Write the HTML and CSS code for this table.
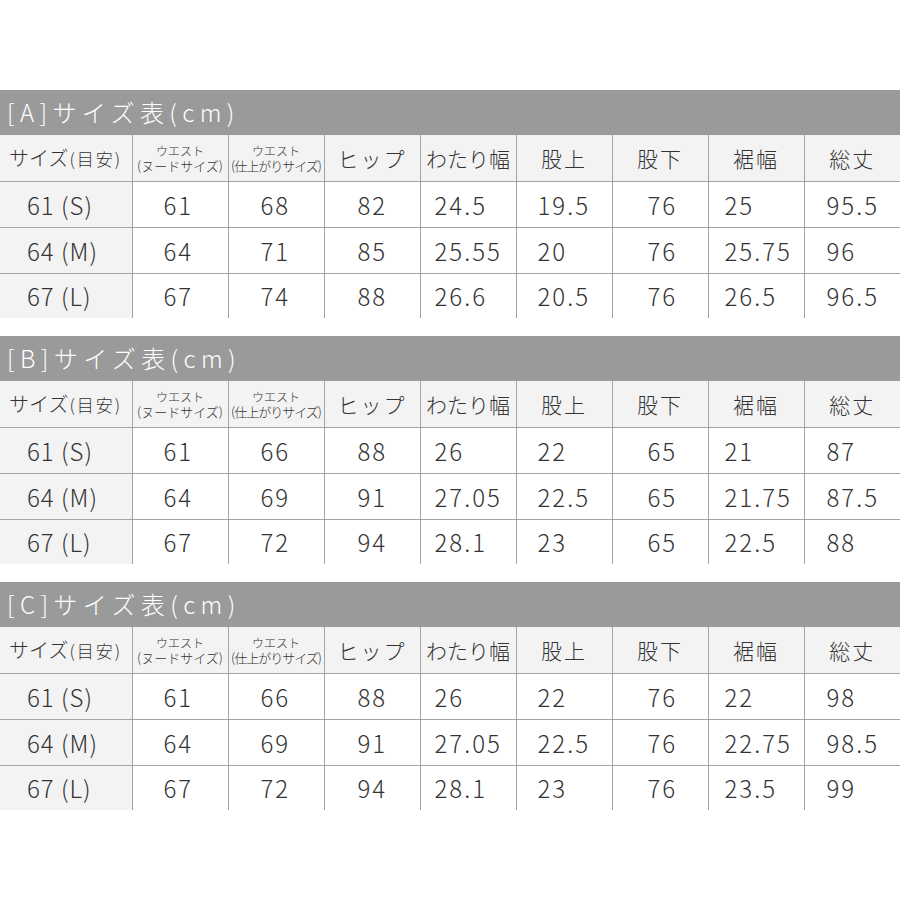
FILE: index.html
```html
<!DOCTYPE html>
<html lang="ja">
<head>
<meta charset="utf-8">
<link rel="stylesheet" href="styles.css">
</head>
<body>
<div class="page">

<section class="block">
  <div class="title">[A]サイズ表(cm)</div>
  <table class="size">
    <colgroup><col class="c1"><col><col><col><col><col><col><col><col></colgroup>
    <thead>
      <tr>
        <th class="h-size">サイズ<span class="sm">(目安)</span></th>
        <th class="h-small"><span>ウエスト</span><span>(ヌードサイズ)</span></th>
        <th class="h-small"><span>ウエスト</span><span class="cond">(仕上がりサイズ)</span></th>
        <th>ヒップ</th><th class="tight">わたり幅</th><th>股上</th><th>股下</th><th>裾幅</th><th>総丈</th>
      </tr>
    </thead>
    <tbody>
      <tr><td>61 (S)</td><td>61</td><td>68</td><td>82</td><td>24.5</td><td>19.5</td><td>76</td><td>25</td><td>95.5</td></tr>
      <tr><td>64 (M)</td><td>64</td><td>71</td><td>85</td><td>25.55</td><td>20</td><td>76</td><td>25.75</td><td>96</td></tr>
      <tr><td>67 (L)</td><td>67</td><td>74</td><td>88</td><td>26.6</td><td>20.5</td><td>76</td><td>26.5</td><td>96.5</td></tr>
    </tbody>
  </table>
</section>

<section class="block">
  <div class="title">[B]サイズ表(cm)</div>
  <table class="size">
    <colgroup><col class="c1"><col><col><col><col><col><col><col><col></colgroup>
    <thead>
      <tr>
        <th class="h-size">サイズ<span class="sm">(目安)</span></th>
        <th class="h-small"><span>ウエスト</span><span>(ヌードサイズ)</span></th>
        <th class="h-small"><span>ウエスト</span><span class="cond">(仕上がりサイズ)</span></th>
        <th>ヒップ</th><th class="tight">わたり幅</th><th>股上</th><th>股下</th><th>裾幅</th><th>総丈</th>
      </tr>
    </thead>
    <tbody>
      <tr><td>61 (S)</td><td>61</td><td>66</td><td>88</td><td>26</td><td>22</td><td>65</td><td>21</td><td>87</td></tr>
      <tr><td>64 (M)</td><td>64</td><td>69</td><td>91</td><td>27.05</td><td>22.5</td><td>65</td><td>21.75</td><td>87.5</td></tr>
      <tr><td>67 (L)</td><td>67</td><td>72</td><td>94</td><td>28.1</td><td>23</td><td>65</td><td>22.5</td><td>88</td></tr>
    </tbody>
  </table>
</section>

<section class="block">
  <div class="title">[C]サイズ表(cm)</div>
  <table class="size">
    <colgroup><col class="c1"><col><col><col><col><col><col><col><col></colgroup>
    <thead>
      <tr>
        <th class="h-size">サイズ<span class="sm">(目安)</span></th>
        <th class="h-small"><span>ウエスト</span><span>(ヌードサイズ)</span></th>
        <th class="h-small"><span>ウエスト</span><span class="cond">(仕上がりサイズ)</span></th>
        <th>ヒップ</th><th class="tight">わたり幅</th><th>股上</th><th>股下</th><th>裾幅</th><th>総丈</th>
      </tr>
    </thead>
    <tbody>
      <tr><td>61 (S)</td><td>61</td><td>66</td><td>88</td><td>26</td><td>22</td><td>76</td><td>22</td><td>98</td></tr>
      <tr><td>64 (M)</td><td>64</td><td>69</td><td>91</td><td>27.05</td><td>22.5</td><td>76</td><td>22.75</td><td>98.5</td></tr>
      <tr><td>67 (L)</td><td>67</td><td>72</td><td>94</td><td>28.1</td><td>23</td><td>76</td><td>23.5</td><td>99</td></tr>
    </tbody>
  </table>
</section>

</div>
</body>
</html>
```
FILE: styles.css
```css
html, body {
  margin: 0;
  padding: 0;
  background: #ffffff;
}
body {
  font-family: "Noto Sans CJK JP", "Noto Sans", sans-serif;
  color: #333333;
}
.page {
  width: 900px;
  padding-top: 90px;
  display: flex;
  flex-direction: column;
  gap: 18px;
}
.title {
  height: 45px;
  background: #9a9a9a;
  color: #ffffff;
  font-size: 24px;
  font-weight: 300;
  line-height: 44px;
  letter-spacing: 5.4px;
  padding-left: 7px;
  box-sizing: border-box;
}
.size {
  width: 900px;
  table-layout: fixed;
  border-collapse: collapse;
}
.size col { width: 96px; }
.size col.c1 { width: 132px; }
.size th, .size td {
  padding: 0;
  border-left: 1px solid #a3a3a3;
  white-space: nowrap;
  overflow: hidden;
}
.size th:first-child, .size td:first-child { border-left: none; }
.size thead tr { height: 46px; }
.size th {
  background: #f3f3f3;
  font-weight: 300;
  font-size: 21px;
  letter-spacing: 2px;
  text-align: center;
  border-bottom: 1px solid #a3a3a3;
}
.size th.tight { letter-spacing: 0; }
.size th.h-size {
  text-align: left;
  padding-left: 9px;
  font-size: 20px;
  letter-spacing: 0;
}
.size th .sm {
  font-size: 17px;
  letter-spacing: 2px;
  margin-left: 1px;
}
.size th.h-small {
  font-size: 13px;
  letter-spacing: 0;
  line-height: 15px;
  padding-top: 0;
}
.size th.h-small span { display: block; }
.size th.h-small span:first-child { font-size: 12px; }
.size th.h-small .cond { letter-spacing: -1px; }
.size tbody tr { height: 46px; }
.size tbody tr:last-child { height: 45px; }
.size tbody tr:not(:last-child) td { border-bottom: 1px solid #a3a3a3; }
.size td {
  font-size: 24px;
  font-weight: 300;
  letter-spacing: 2px;
  text-align: left;
}
.size td:nth-child(1) { background: #f3f3f3; padding-left: 27px; letter-spacing: 1px; }
.size td:nth-child(2) { padding-left: 31px; }
.size td:nth-child(3) { padding-left: 32px; }
.size td:nth-child(4) { padding-left: 33px; }
.size td:nth-child(5) { padding-left: 14px; }
.size td:nth-child(6) { padding-left: 21px; }
.size td:nth-child(7) { padding-left: 35px; }
.size td:nth-child(8) { padding-left: 16px; }
.size td:nth-child(9) { padding-left: 22px; }
```
